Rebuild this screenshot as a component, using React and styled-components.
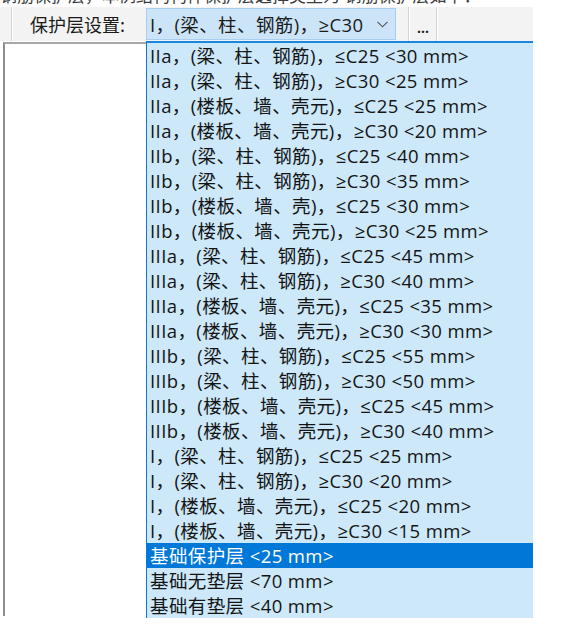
import React from "react";
import styled, { createGlobalStyle } from "styled-components";

const FONT = `"Open Sans", "DejaVu Sans", "Noto Sans CJK SC", sans-serif`;

const Global = createGlobalStyle`
  html, body { margin: 0; padding: 0; background: #ffffff; }
  body { font-family: ${FONT}; }
`;

const Page = styled.div`
  width: 561px;
  height: 643px;
  overflow: hidden;
  background: #ffffff;
  display: flex;
  flex-direction: column;
`;

const ClippedLine = styled.div`
  height: 7px;
  overflow: hidden;
  font-family: ${FONT};
  font-size: 17px;
  line-height: 20px;
  color: #3a3a3a;
  white-space: nowrap;
  & > span { display: block; margin-top: -14px; }
`;

const Toolbar = styled.div`
  width: 533px;
  height: 34px;
  background: #f3f3f3;
  display: flex;
  align-items: stretch;
  box-sizing: border-box;
`;

const Sep = styled.div`
  width: 1px;
  margin-left: ${(p) => p.$ml || 0}px;
  background: #d4d4d4;
  border-right: 1px solid #ffffff;
`;

const Label = styled.div`
  display: flex;
  align-items: center;
  padding-left: 17px;
  width: 116px;
  font-family: "Noto Sans CJK SC", sans-serif;
  font-size: 18px;
  color: #1a1a1a;
`;

const Combo = styled.div`
  margin-top: 1px;
  margin-bottom: 1px;
  width: 250px;
  box-sizing: border-box;
  background: #cce4f7;
  border: 1px solid #a9cdee;
  display: flex;
  align-items: center;
  padding-left: 3px;
  font-family: ${FONT};
  font-size: 18.5px;
  letter-spacing: 0.4px;
  color: #1a1a1a;
  white-space: nowrap;
  overflow: hidden;
`;

const ComboText = styled.span`
  flex: 1;
`;

const Chevron = styled.svg`
  width: 11px;
  height: 7px;
  margin-right: 7px;
  flex-shrink: 0;
`;

const DotsButton = styled.div`
  width: 26px;
  display: flex;
  align-items: center;
  justify-content: center;
  font-family: ${FONT};
  font-size: 14px;
  font-weight: bold;
  color: #222;
  padding-top: 6px;
  box-sizing: border-box;
`;

const Body = styled.div`
  display: flex;
  align-items: flex-start;
`;

const LeftPanel = styled.div`
  margin-left: 3px;
  margin-top: 1px;
  width: 143px;
  height: 574px;
  box-sizing: border-box;
  background: #ffffff;
  border-left: 2px solid #8f8f8f;
  border-top: 2px solid #a8a8a8;
`;

const List = styled.div`
  width: 387px;
  box-sizing: border-box;
  background: #cce8f9;
  border-left: 1px solid #0a78d4;
  border-top: 2px solid #1a86e0;
  display: flex;
  flex-direction: column;
`;

const Item = styled.div`
  height: 25px;
  line-height: 25px;
  padding-left: 3px;
  font-family: ${FONT};
  font-size: 18.5px;
  letter-spacing: 0.4px;
  white-space: nowrap;
  overflow: hidden;
  color: ${(p) => (p.$selected ? "#ffffff" : "#141414")};
  background: ${(p) => (p.$selected ? "#0078d7" : "transparent")};
`;

const items = [
  "IIa，(梁、柱、钢筋)，≤C25 <30 mm>",
  "IIa，(梁、柱、钢筋)，≥C30 <25 mm>",
  "IIa，(楼板、墙、壳元)，≤C25 <25 mm>",
  "IIa，(楼板、墙、壳元)，≥C30 <20 mm>",
  "IIb，(梁、柱、钢筋)，≤C25 <40 mm>",
  "IIb，(梁、柱、钢筋)，≥C30 <35 mm>",
  "IIb，(楼板、墙、壳)，≤C25 <30 mm>",
  "IIb，(楼板、墙、壳元)，≥C30 <25 mm>",
  "IIIa，(梁、柱、钢筋)，≤C25 <45 mm>",
  "IIIa，(梁、柱、钢筋)，≥C30 <40 mm>",
  "IIIa，(楼板、墙、壳元)，≤C25 <35 mm>",
  "IIIa，(楼板、墙、壳元)，≥C30 <30 mm>",
  "IIIb，(梁、柱、钢筋)，≤C25 <55 mm>",
  "IIIb，(梁、柱、钢筋)，≥C30 <50 mm>",
  "IIIb，(楼板、墙、壳元)，≤C25 <45 mm>",
  "IIIb，(楼板、墙、壳元)，≥C30 <40 mm>",
  "I，(梁、柱、钢筋)，≤C25 <25 mm>",
  "I，(梁、柱、钢筋)，≥C30 <20 mm>",
  "I，(楼板、墙、壳元)，≤C25 <20 mm>",
  "I，(楼板、墙、壳元)，≥C30 <15 mm>",
  "基础保护层 <25 mm>",
  "基础无垫层 <70 mm>",
  "基础有垫层 <40 mm>",
];

export default function App() {
  return (
    <Page>
      <Global />
      <ClippedLine>
        <span>钢筋保护层，本例结构构件保护层选择类型为       钢筋保护层如下：</span>
      </ClippedLine>
      <Toolbar>
        <Sep $ml={11} />
        <Label>保护层设置:</Label>
        <Combo>
          <ComboText>I，(梁、柱、钢筋)，≥C30</ComboText>
          <Chevron viewBox="0 0 11 7">
            <path d="M0.5 0.8 L5.5 5.8 L10.5 0.8" fill="none" stroke="#555" strokeWidth="1.1" />
          </Chevron>
        </Combo>
        <Sep $ml={12} />
        <DotsButton>...</DotsButton>
        <Sep />
      </Toolbar>
      <Body>
        <LeftPanel />
        <List>
          {items.map((t, i) => (
            <Item key={i} $selected={i === 20}>
              {t}
            </Item>
          ))}
        </List>
      </Body>
    </Page>
  );
}
